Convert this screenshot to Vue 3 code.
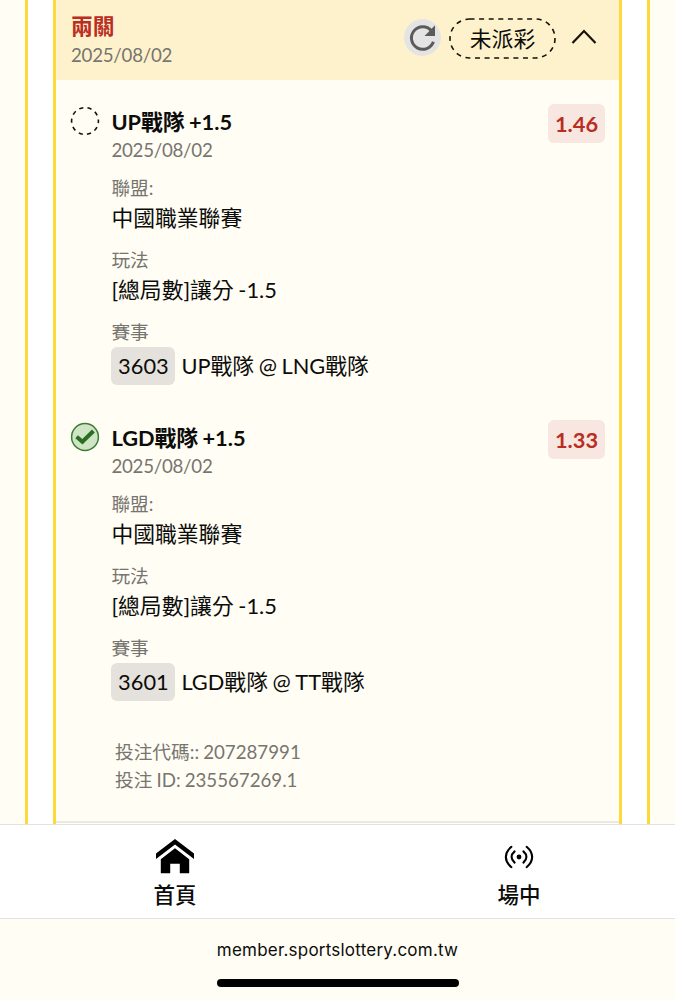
<template>
  <div class="page">
    <main class="content">
      <div class="outer-frame">
        <section class="bet-card">
          <header class="card-header">
            <div class="card-title">
              <h2>兩關</h2>
              <p class="date">2025/08/02</p>
            </div>
            <button class="refresh" aria-label="重新整理">
              <svg viewBox="0 0 37 37" width="37" height="37">
                <path d="M29.4 22.8A11.3 11.3 0 1 1 27.3 11.6" fill="none" stroke="#5b5b59" stroke-width="3" />
                <path d="M31 6.2V17H20.5Z" fill="#5b5b59" />
              </svg>
            </button>
            <div class="status">
              <svg viewBox="0 0 107 41" width="107" height="41">
                <rect x="1" y="1" width="105" height="39" rx="19.5" />
              </svg>
              <span>未派彩</span>
            </div>
            <button class="toggle" aria-label="收合">
              <svg viewBox="0 0 26 16" width="26" height="16">
                <path d="M1.5 14L13 2L24.5 14" fill="none" stroke="#15120a" stroke-width="2.2" />
              </svg>
            </button>
          </header>

          <article v-for="leg in legs" :key="leg.code" class="leg">
            <svg v-if="leg.won" class="leg-icon" viewBox="0 0 30 30" width="30" height="30">
              <circle cx="15" cy="15" r="13.4" fill="#cfe5c6" stroke="#3c7d35" stroke-width="1.5" />
              <path d="M6.6 14.7L12.4 19.8L23.4 9" fill="none" stroke="#28701f" stroke-width="4" />
            </svg>
            <svg v-else class="leg-icon" viewBox="0 0 30 30" width="30" height="30">
              <circle cx="15" cy="15" r="13.4" fill="none" stroke="#15120a" stroke-width="1.6" stroke-dasharray="4.2 4.22" stroke-dashoffset="2.1" />
            </svg>
            <div class="leg-body">
              <h3>{{ leg.pick }}</h3>
              <p class="date">{{ leg.date }}</p>
              <dl>
                <dt>聯盟:</dt>
                <dd>{{ leg.league }}</dd>
                <dt>玩法</dt>
                <dd>{{ leg.market }}</dd>
                <dt>賽事</dt>
                <dd class="match">
                  <span class="code">{{ leg.code }}</span>
                  <span>{{ leg.match }}</span>
                </dd>
              </dl>
            </div>
            <span class="odds">{{ leg.odds }}</span>
          </article>

          <footer class="bet-info">
            <p>投注代碼:: 207287991</p>
            <p>投注 ID: 235567269.1</p>
          </footer>
        </section>
      </div>
    </main>

    <nav class="tab-bar">
      <a class="tab">
        <svg viewBox="0 0 40 36" width="40" height="36">
          <path d="M20 0L39 14.6V20L20 5.4L1 20V14.6Z" />
          <path d="M20 9.3L34.2 20.2V34.2H24.8V24.7H15.2V34.2H5.8V20.2Z" />
        </svg>
        <span>首頁</span>
      </a>
      <a class="tab">
        <svg viewBox="0 0 40 36" width="40" height="36">
          <g fill="none" stroke="#000" stroke-width="2.1" stroke-linecap="round">
            <path d="M12.4 7.8C5 14 5 22 12.4 28.2" />
            <path d="M15.6 12.4C11.6 15.8 11.6 20.2 15.6 23.6" />
            <path d="M24.4 12.4C28.4 15.8 28.4 20.2 24.4 23.6" />
            <path d="M27.6 7.8C35 14 35 22 27.6 28.2" />
          </g>
          <circle cx="20" cy="18" r="2.4" />
        </svg>
        <span>場中</span>
      </a>
    </nav>

    <div class="browser-bar">
      <span class="address">member.sportslottery.com.tw</span>
      <div class="home-indicator"></div>
    </div>
  </div>
</template>

<script setup>
const legs = [
  {
    pick: 'UP戰隊 +1.5',
    date: '2025/08/02',
    league: '中國職業聯賽',
    market: '[總局數]讓分 -1.5',
    code: '3603',
    match: 'UP戰隊 @ LNG戰隊',
    odds: '1.46',
    won: false,
  },
  {
    pick: 'LGD戰隊 +1.5',
    date: '2025/08/02',
    league: '中國職業聯賽',
    market: '[總局數]讓分 -1.5',
    code: '3601',
    match: 'LGD戰隊 @ TT戰隊',
    odds: '1.33',
    won: true,
  },
]
</script>

<style>
body {
  margin: 0;
}
</style>

<style scoped>
.page {
  display: flex;
  flex-direction: column;
  height: 1000px;
  overflow: hidden;
  background: #fffdf4;
  color: #0c0c0a;
  font-family: Lato, "Noto Sans CJK TC", sans-serif;
  font-size: 21.8px;
}
h2, h3, p, dl, dd {
  margin: 0;
}
button {
  padding: 0;
  border: 0;
  background: none;
}
svg {
  display: block;
}
.content {
  height: 824px;
  flex: none;
  padding: 0 25px;
  box-sizing: border-box;
}
.outer-frame {
  display: flex;
  height: 100%;
  padding: 0 25px;
  box-sizing: border-box;
  border: solid #fdd93b;
  border-width: 0 3px;
  background: #fff;
}
.bet-card {
  flex: 1;
  height: 100%;
  box-sizing: border-box;
  border: solid #fdd93b;
  border-width: 0 3px;
  background: #fffdf4;
}
.card-header {
  display: flex;
  align-items: center;
  height: 80px;
  padding: 0 22px 0 15px;
  box-sizing: border-box;
  background: #fef2cc;
}
.card-title {
  flex: 1;
}
h2 {
  color: #b92d22;
  font-size: 21.8px;
  line-height: 28px;
}
.date {
  color: #777570;
  font-size: 18.7px;
  letter-spacing: -0.25px;
  line-height: 28px;
}
.card-title .date {
  padding-top: 1px;
  margin-bottom: -1px;
}
.refresh {
  margin: 0 8px 5px 0;
  border-radius: 50%;
  background: #e5e4e5;
}
.status {
  display: grid;
  place-items: center;
  margin-bottom: 3px;
  line-height: 30px;
}
.status > * {
  grid-area: 1 / 1;
}
.status rect {
  fill: none;
  stroke: #15120a;
  stroke-width: 1.6;
  stroke-dasharray: 5 4.6;
}
.toggle {
  margin: 0 0 7px 15px;
}
.leg {
  display: flex;
  align-items: flex-start;
  height: 277px;
  padding: 24px 14px 0 14px;
  margin-bottom: 15px;
}
.leg-icon {
  margin: 2px 11.4px 0 0;
}
.leg-body {
  flex: 1;
  padding-top: 3px;
}
h3 {
  font-size: 21.8px;
  line-height: 29px;
  word-spacing: -1px;
}
dl {
  margin-top: 10px;
}
dt {
  color: #777570;
  font-size: 18.7px;
  line-height: 28px;
}
dd {
  line-height: 30px;
  padding-top: 1px;
  margin-bottom: 13px;
  word-spacing: -1px;
}
.match {
  display: flex;
  align-items: center;
  gap: 6px;
  margin-bottom: 0;
}
.code {
  width: 64px;
  border-radius: 6px;
  background: #e5e2dd;
  line-height: 38px;
  text-align: center;
}
.odds {
  width: 57px;
  border-radius: 6px;
  background: #f8e7e1;
  color: #b92d22;
  font-weight: bold;
  line-height: 39px;
  text-align: center;
}
.bet-info {
  height: 83px;
  padding: 26px 0 0 59px;
  margin-top: 15px;
  border-bottom: 2px solid #e9e8e2;
  color: #777570;
  font-size: 18.7px;
  line-height: 28px;
  word-spacing: -0.7px;
}
.tab-bar {
  display: flex;
  flex: none;
  height: 95px;
  box-sizing: border-box;
  padding-left: 3px;
  border: solid #e2e2e2;
  border-width: 1px 0;
  background: #fff;
}
.tab {
  display: flex;
  flex: none;
  flex-direction: column;
  align-items: center;
  width: 344px;
  padding-top: 14px;
  font-size: 21.5px;
  font-weight: 500;
  line-height: 30px;
}
.tab:last-child {
  margin-right: -16px;
}
.tab span {
  margin-top: 5px;
}
.browser-bar {
  display: flex;
  flex-direction: column;
  align-items: center;
}
.address {
  margin-top: 20px;
  font-family: Inter, sans-serif;
  font-size: 17px;
  letter-spacing: 0.22px;
  line-height: 22px;
}
.home-indicator {
  width: 242px;
  height: 8px;
  margin-top: 18px;
  border-radius: 4px;
  background: #000;
}
</style>
